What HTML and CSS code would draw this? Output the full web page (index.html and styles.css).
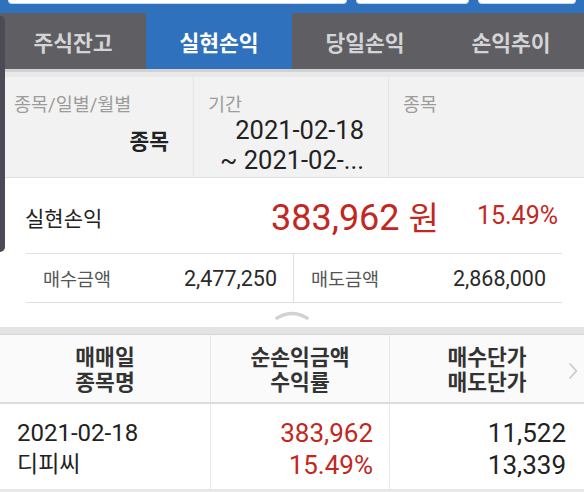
FILE: index.html
```html
<!DOCTYPE html>
<html lang="ko">
<head>
    <meta charset="UTF-8">
    <meta name="viewport" content="width=device-width, initial-scale=1.0">
    <title>실현손익</title>
    <link rel="stylesheet" href="styles.css">
</head>
<body>

    <div class="drawer-handle"></div>

    <header class="top-bar">
        <div class="top-input wide"></div>
        <div class="top-input mid"></div>
        <div class="top-input small"></div>
    </header>

    <nav class="tabs">
        <div class="tab">주식잔고</div>
        <div class="tab active">실현손익</div>
        <div class="tab">당일손익</div>
        <div class="tab">손익추이</div>
    </nav>
    <div class="tabs-shadow"></div>

    <section class="filters">
        <div class="filter">
            <div class="filter-label">종목/일별/월별</div>
            <div class="filter-value bold">종목</div>
        </div>
        <div class="filter">
            <div class="filter-label">기간</div>
            <div class="filter-value date">2021-02-18<br>~ 2021-02-...</div>
        </div>
        <div class="filter">
            <div class="filter-label">종목</div>
        </div>
    </section>

    <section class="summary">
        <div class="summary-main">
            <span class="summary-label">실현손익</span>
            <span class="summary-amount">383,962 <span class="won">원</span></span>
            <span class="summary-rate">15.49%</span>
        </div>
        <div class="summary-sub">
            <div class="sub-item">
                <span class="sub-label">매수금액</span>
                <span class="sub-value">2,477,250</span>
            </div>
            <div class="sub-item">
                <span class="sub-label">매도금액</span>
                <span class="sub-value">2,868,000</span>
            </div>
        </div>
        <div class="collapse">
            <svg width="34" height="10" viewBox="0 0 34 10">
                <path d="M2 8 Q17 -1 32 8" fill="none" stroke="#d2d2d2" stroke-width="3.5" stroke-linecap="round"/>
            </svg>
        </div>
    </section>

    <div class="band"></div>

    <section class="table">
        <div class="table-head">
            <div class="cell">매매일<br>종목명</div>
            <div class="cell">순손익금액<br>수익률</div>
            <div class="cell">매수단가<br>매도단가</div>
            <svg class="more" width="10" height="18" viewBox="0 0 10 18">
                <path d="M1.5 1.5 L8.5 9 L1.5 16.5" fill="none" stroke="#c4c4c4" stroke-width="1.4"/>
            </svg>
        </div>
        <div class="table-row">
            <div class="cell left">
                <div class="date-text">2021-02-18</div>
                <div class="name-text">디피씨</div>
            </div>
            <div class="cell right red">
                <div>383,962</div>
                <div>15.49%</div>
            </div>
            <div class="cell right">
                <div>11,522</div>
                <div>13,339</div>
            </div>
        </div>
    </section>

</body>
</html>
```

FILE: styles.css
```css
:root {
    --blue: #2f71bd;
    --tab-bg: #5f5e63;
    --tab-text: #d4d4d6;
    --red: #c3271f;
    --text: #222222;
    --muted: #9c9c9c;
    --line: #e0e0e0;
    --font: Roboto, "Noto Sans CJK KR", sans-serif;
}

html, body {
    margin: 0;
    width: 584px;
    height: 492px;
    overflow: hidden;
    background: #e8e8e8;
    font-family: var(--font);
    color: var(--text);
}

body {
    position: relative;
}

.drawer-handle {
    position: absolute;
    left: 0;
    top: 16px;
    width: 5px;
    height: 236px;
    background: #4c4b55;
    border-radius: 0 6px 6px 0;
    z-index: 5;
}

.top-bar {
    height: 13px;
    background: var(--blue);
    display: flex;
    gap: 9px;
    padding: 0 8px;
}

.top-input {
    height: 3px;
    background: #fff;
    border: 1px solid #cbd8ea;
    border-top: none;
    border-radius: 0 0 4px 4px;
}

.top-input.wide { width: 338px; }
.top-input.mid { width: 111px; }
.top-input.small { width: 96px; }

.tabs {
    display: grid;
    grid-template-columns: repeat(4, 1fr);
    height: 56px;
    background: var(--tab-bg);
}

.tab {
    display: flex;
    justify-content: center;
    align-items: center;
    font-size: 21.5px;
    font-weight: 700;
    color: var(--tab-text);
}

.tab.active {
    background: var(--blue);
    color: #fff;
}

.tabs-shadow {
    height: 5px;
    background: #e9e9e9;
    border-top: 3px solid #d2d2d2;
}

.filters {
    display: grid;
    grid-template-columns: 194px 195px 1fr;
    height: 100px;
    background: #f2f2f2;
    border-bottom: 1px solid var(--line);
}

.filter {
    border-right: 1px solid #e4e4e4;
    padding: 17px 24px 0 14px;
}

.filter:last-child {
    border-right: none;
}

.filter-label {
    font-size: 18.5px;
    color: var(--muted);
    line-height: 22px;
}

.filter-value {
    text-align: right;
    color: #222;
}

.filter-value.bold {
    font-size: 21.5px;
    font-weight: 700;
    margin-top: 8px;
}

.filter-value.date {
    font-size: 25.5px;
    line-height: 30px;
    margin-top: -1px;
}

.summary {
    background: #fff;
    padding: 0 22px 0 26px;
}

.summary-main {
    display: flex;
    align-items: center;
    height: 75px;
}

.summary-label {
    flex: 1;
    font-size: 21px;
    margin-left: -1px;
    padding-top: 3px;
}

.summary-amount {
    font-size: 36px;
    color: var(--red);
}

.summary-amount .won {
    font-size: 33px;
}

.summary-rate {
    font-size: 25px;
    color: var(--red);
    margin-left: 38px;
    padding-right: 4px;
}

.summary-sub {
    display: grid;
    grid-template-columns: 267px 1fr;
    height: 48px;
    border-top: 1px solid var(--line);
    border-bottom: 1px solid var(--line);
}

.sub-item {
    display: flex;
    justify-content: space-between;
    align-items: center;
    padding: 0 16px 0 17px;
}

.sub-item + .sub-item {
    border-left: 1px solid var(--line);
}

.sub-label {
    font-size: 18.5px;
    color: #555;
}

.sub-value {
    font-size: 21.5px;
    color: #2a2a2a;
}

.collapse {
    height: 24px;
    display: flex;
    justify-content: center;
    align-items: center;
    margin-left: -26px;
    margin-right: -22px;
}

.band {
    height: 7px;
    background: #e3e3e3;
    border-bottom: 1px solid #d6d6d6;
}

.table {
    background: #fff;
}

.table-head,
.table-row {
    display: grid;
    grid-template-columns: 210px 179px 1fr;
    position: relative;
}

.table-head {
    height: 67px;
    background: #fafafa;
    border-bottom: 2px solid #dcdcdc;
}

.table-head .cell {
    display: flex;
    justify-content: center;
    align-items: center;
    text-align: center;
    font-size: 21.5px;
    font-weight: 700;
    line-height: 25px;
    color: #333;
    padding-top: 3px;
}

.cell + .cell {
    border-left: 1px solid #e8e8e8;
}

.more {
    position: absolute;
    right: 6px;
    top: 27px;
}

.table-row {
    height: 85px;
    border-bottom: 1px solid #e6e6e6;
}

.table-row .cell {
    display: flex;
    flex-direction: column;
    justify-content: center;
    font-size: 26px;
    line-height: 32px;
    color: #222;
    padding-top: 5px;
}

.table-row .cell.left {
    padding-left: 17px;
}

.table-row .cell.right {
    align-items: flex-end;
    padding-right: 16px;
}

.table-row .cell.right:last-child {
    padding-right: 18px;
}

.table-row .cell.red {
    color: var(--red);
}

.date-text {
    font-size: 24px;
}

.name-text {
    font-size: 23px;
}
```
